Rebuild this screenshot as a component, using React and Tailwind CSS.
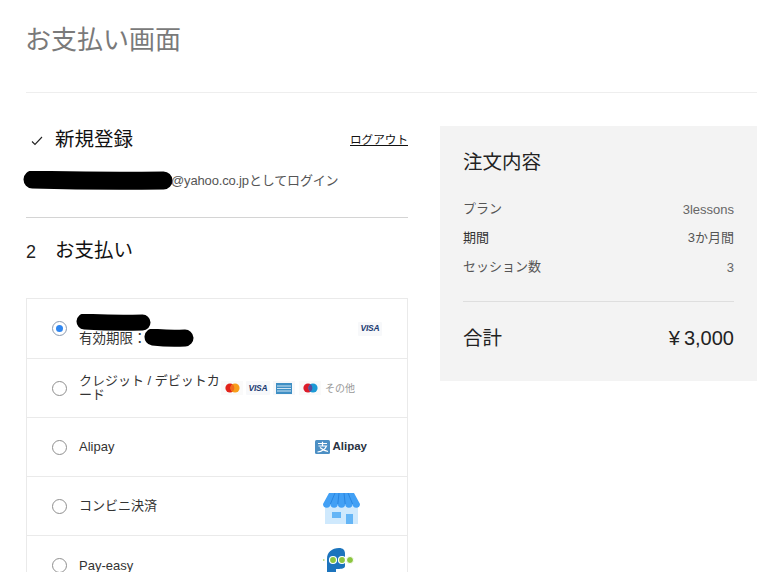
const FONT = "font-['Liberation_Sans','Noto_Sans_CJK_JP',sans-serif]";

function Scribble({ w, h = 16, className = '' }) {
  return (
    <svg width={w} height={h} viewBox={`0 0 ${w} ${h}`} className={`block shrink-0 ${className}`}>
      <path d={`M${h / 2} ${h / 2 - 1} Q${w / 2} ${h / 2 + 1} ${w - h / 2} ${h / 2}`} stroke="#000" strokeWidth={h - 1} strokeLinecap="round" fill="none" />
    </svg>
  );
}

function Radio({ checked }) {
  return (
    <span className={`flex h-[15px] w-[15px] shrink-0 items-center justify-center rounded-full border bg-white ${checked ? 'border-[#8a9ab0]' : 'border-[#8f8f8f]'}`}>
      {checked && <span className="h-[7px] w-[7px] rounded-full bg-[#2f86f0]" />}
    </span>
  );
}

function Visa() {
  return (
    <span className="flex h-[14px] w-[24px] items-center justify-center rounded-[1px] bg-[#f7f8fa] text-[8.5px] font-bold italic tracking-tight text-[#1a3a72]">VISA</span>
  );
}

function Mastercard() {
  return (
    <span className="flex h-[14px] w-[22px] items-center justify-center bg-[#fafafa]">
      <svg width="15" height="10" viewBox="0 0 15 10">
        <circle cx="5" cy="5" r="4.6" fill="#e2231a" />
        <circle cx="10" cy="5" r="4.6" fill="#f79e1b" />
        <path d="M7.5 1.3a4.6 4.6 0 0 1 0 7.4a4.6 4.6 0 0 1 0-7.4z" fill="#f26a1d" />
      </svg>
    </span>
  );
}

function Amex() {
  return (
    <span className="flex h-[14px] w-[22px] items-center justify-center bg-[#f7f8fa]">
      <svg width="16" height="11" viewBox="0 0 16 11">
        <rect width="16" height="11" fill="#3f8fc4" />
        <path d="M1 3h14M1 5.500h14M1 8h14" stroke="#cfe4f3" strokeWidth="1" />
      </svg>
    </span>
  );
}

function Maestro() {
  return (
    <span className="flex h-[14px] w-[22px] items-center justify-center bg-[#fafafa]">
      <svg width="15" height="10" viewBox="0 0 15 10">
        <circle cx="5" cy="5" r="4.6" fill="#dd1c2a" />
        <circle cx="10" cy="5" r="4.6" fill="#1c9ad6" />
        <path d="M7.5 1.3a4.6 4.6 0 0 1 0 7.4a4.6 4.6 0 0 1 0-7.4z" fill="#5a4a9c" />
      </svg>
    </span>
  );
}

function AlipayLogo() {
  return (
    <span className="flex items-center gap-[2px]">
      <svg width="15" height="14" viewBox="0 0 15 14">
        <rect width="15" height="14" rx="1.500" fill="#4c8fc4" />
        <path d="M3 3.500h9M7.500 1.800v3.600M3.500 6h8C10 9.500 6.500 11.500 2.500 12M5 7.500c2 1.800 4.500 3.200 8 4" stroke="#fff" strokeWidth="1.200" fill="none" />
      </svg>
      <span className="text-[11.5px] font-bold leading-none text-[#2a3342]">Alipay</span>
    </span>
  );
}

function StoreIcon() {
  return (
    <svg width="37" height="32" viewBox="0 0 37 32">
      <rect x="2" y="11" width="33" height="20" fill="#cfe9fd" />
      <rect x="9" y="19" width="9" height="6" fill="#64b5f6" />
      <rect x="23" y="21" width="7" height="10" fill="#64b5f6" />
      <path d="M6 0H31L37 11A3.700 3.700 0 0 1 29.600 11A3.700 3.700 0 0 1 22.200 11A3.700 3.700 0 0 1 14.800 11A3.700 3.700 0 0 1 7.400 11A3.700 3.700 0 0 1 0 11Z" fill="#42a0f5" />
      <path d="M12 0L7.400 11M16 0L14.800 11M21 0L22.200 11M25 0L29.600 11" stroke="#2a86e0" strokeWidth="1" />
    </svg>
  );
}

function PayEasyLogo() {
  return (
    <svg width="36" height="32" viewBox="0 0 36 32">
      <path d="M4 32V11C4 4 9 0 16 0C20 0 22 2 22 6V18C22 21 17 21 13 21V32Z" fill="#1c74bd" />
      <circle cx="0.800" cy="12" r="0.800" fill="#8cc63f" />
      <circle cx="10" cy="12" r="3.500" fill="#8cc63f" stroke="#fff" strokeWidth="1.200" />
      <circle cx="19" cy="12" r="3.500" fill="#8cc63f" stroke="#fff" strokeWidth="1.200" />
      <circle cx="27" cy="12" r="3.500" fill="#8cc63f" stroke="#fff" strokeWidth="1" />
    </svg>
  );
}

function PayRow({ label, right, checked, last, first }) {
  return (
    <div className={`flex items-center pl-[25px] pr-[25px] ${first ? 'h-[60px]' : 'h-[59px]'} ${last ? '' : 'border-b border-[#eaeaea]'}`}>
      <Radio checked={checked} />
      <div className="ml-[12px] min-w-0 flex-1 text-[13px] leading-[14px] text-[#333]">{label}</div>
      {right}
    </div>
  );
}

export default function App() {
  return (
    <div className={`h-[572px] w-[778px] overflow-hidden bg-white pl-[26px] pr-[21px] ${FONT}`}>
      <h1 className="-ml-[1px] pt-[22px] pb-[34px] text-[26px] leading-[36px] font-normal text-[#7a7a7a]">お支払い画面</h1>
      <div className="border-t border-[#eeeeee]" />

      <div className="mt-[33px] flex items-start gap-[32px]">
        {/* left column */}
        <div className="w-[382px] shrink-0">
          <div className="flex items-center justify-between">
            <div className="flex items-center">
              <svg width="12" height="10" viewBox="0 0 12 10" className="ml-[5px] mt-[3px]">
                <path d="M1 5.500l3 3l7-7.500" stroke="#222" strokeWidth="1.100" fill="none" />
              </svg>
              <span className="ml-[12px] text-[19.5px] leading-[27px] text-[#111]">新規登録</span>
            </div>
            <a className="text-[11.6px] leading-[14px] text-[#111] underline">ログアウト</a>
          </div>

          <div className="-ml-[3px] mt-[18px] flex items-center text-[13px] leading-[18px] tracking-[-0.15px] text-[#555]">
            <Scribble w={150} h={19} />
            <span className="-ml-[2px]">@yahoo.co.jpとしてログイン</span>
          </div>

          <div className="mt-[27px] border-t border-[#d4d4d4]" />

          <div className="mt-[18px] flex items-center">
            <span className="mt-[4px] w-[29px] text-[18px] leading-[24px] text-[#222]">2</span>
            <span className="text-[19.5px] leading-[27px] text-[#111]">お支払い</span>
          </div>

          <div className="mt-[34px] border border-[#eaeaea]">
            <PayRow
              first
              checked
              label={
                <div className="pt-[3px]">
                  <Scribble w={75} h={17} className="-ml-[3px]" />
                  <div className="flex items-center text-[13.5px] leading-[16px]">
                    有効期限：<Scribble w={50} h={18} className="-ml-[3px] -mt-[2px]" />
                  </div>
                </div>
              }
              right={<Visa />}
            />
            <PayRow
              label={<div className="w-[143px]">クレジット / デビットカード</div>}
              right={
                <div className="-ml-[40px] mr-[27px] flex items-center gap-[3px]">
                  <Mastercard />
                  <Visa />
                  <Amex />
                  <span className="ml-[1px]"><Maestro /></span>
                  <span className="ml-[1px] text-[10px] text-[#999]">その他</span>
                </div>
              }
            />
            <PayRow label="Alipay" right={<div className="mr-[15px]"><AlipayLogo /></div>} />
            <PayRow label="コンビニ決済" right={<div className="mr-[22px] mt-[6px] flex"><StoreIcon /></div>} />
            <PayRow last label="Pay-easy" right={<div className="mb-[4px] mr-[23px] flex"><PayEasyLogo /></div>} />
          </div>
        </div>

        {/* order summary */}
        <div className="h-[255px] w-[317px] shrink-0 bg-[#f3f3f3] px-[23px] pt-[23px]">
          <h2 className="text-[19.5px] leading-[26px] font-normal text-[#222]">注文内容</h2>
          <dl className="mt-[25px] flex flex-col gap-[11px] text-[13px] leading-[18px] text-[#555]">
            <div className="flex justify-between"><dt>プラン</dt><dd className="mt-[2px] leading-[16px] text-[#666]">3lessons</dd></div>
            <div className="flex justify-between"><dt className="text-[#333]">期間</dt><dd>3か月間</dd></div>
            <div className="flex justify-between"><dt>セッション数</dt><dd className="mt-[2px] leading-[16px] text-[#666]">3</dd></div>
          </dl>
          <div className="mt-[25px] border-t border-[#dedede]" />
          <div className="mt-[22px] flex items-center justify-between text-[19.5px] leading-[28px] text-[#222]">
            <span>合計</span>
            <span className="text-[20px]">¥<span className="ml-[4px]">3,000</span></span>
          </div>
        </div>
      </div>
    </div>
  );
}
